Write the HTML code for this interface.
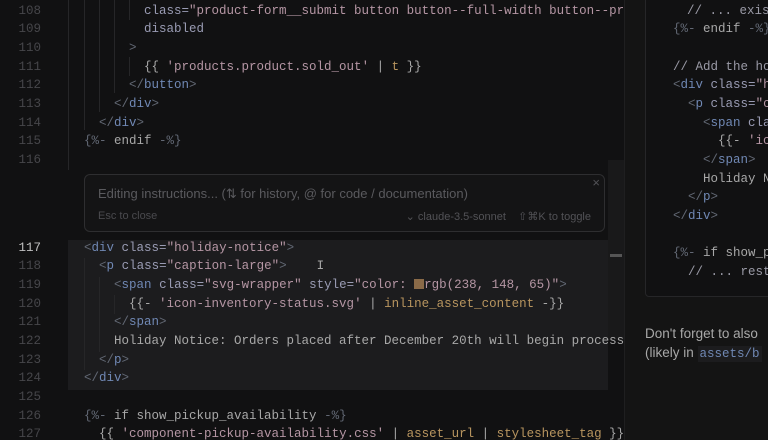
<!DOCTYPE html>
<html><head><meta charset="utf-8"><style>
*{margin:0;padding:0;box-sizing:border-box}
html,body{width:768px;height:440px;overflow:hidden}
body{background:#111112;font-family:"Liberation Mono",monospace;font-size:12.5px;position:relative}
.code{position:absolute;left:0;width:624px;overflow:hidden}
.ln{position:relative;height:18.67px;line-height:18.67px;white-space:pre;color:#9a9aa6}
.ln .n{position:absolute;left:0;width:41px;text-align:right;color:#46464a}
.ln .t{position:absolute;left:84px}
.g{color:#626874}.tg{color:#7088b4}.a{color:#9a9cb4}.s{color:#b596a4}.f{color:#b8955f}.p{color:#a8a8a8}
.hl{position:absolute;left:68px;top:240px;width:540px;height:150px;background:#1c1c1e}
.box{position:absolute;left:84px;top:174px;width:521px;height:58px;border:1px solid #2e2e30;border-radius:6px;background:#141415;font-family:"Liberation Sans",sans-serif}
.right{position:absolute;left:624px;top:0;width:144px;height:440px;background:#141414;border-left:1px solid #1f1f20;overflow:hidden}
.rb{position:absolute;left:20px;top:-10px;width:140px;height:307px;border:1px solid #262628;border-radius:4px;background:#111112}
.rl{position:absolute;left:48px;white-space:pre;color:#9a9aa6}
.ig{position:absolute;width:1px;background:#262628}
</style></head><body>
<div class="hl"></div>
<div class="ig" style="left:68px;top:0;height:170px"></div>
<div class="ig" style="left:84px;top:0;height:130px"></div>
<div class="ig" style="left:99px;top:0;height:112px"></div>
<div class="ig" style="left:114px;top:0;height:93px"></div>
<div class="ig" style="left:129px;top:0;height:20px"></div>
<div class="ig" style="left:129px;top:57px;height:19px"></div>
<div class="ig" style="left:84px;top:258px;height:112px"></div>
<div class="ig" style="left:99px;top:277px;height:75px"></div>
<div class="ig" style="left:114px;top:295px;height:19px"></div>
<div class="code" style="top:1.7px">
<div class="ln"><span class="n">108</span><span class="t">        <span class="a">class=</span><span class="s">"product-form__submit button button--full-width button--pr</span></span></div>
<div class="ln"><span class="n">109</span><span class="t">        <span class="a">disabled</span></span></div>
<div class="ln"><span class="n">110</span><span class="t">      <span class="g">&gt;</span></span></div>
<div class="ln"><span class="n">111</span><span class="t">        <span class="p">{{ </span><span class="s">'products.product.sold_out'</span><span class="p"> | </span><span class="f">t</span><span class="p"> }}</span></span></div>
<div class="ln"><span class="n">112</span><span class="t">      <span class="g">&lt;/</span><span class="tg">button</span><span class="g">&gt;</span></span></div>
<div class="ln"><span class="n">113</span><span class="t">    <span class="g">&lt;/</span><span class="tg">div</span><span class="g">&gt;</span></span></div>
<div class="ln"><span class="n">114</span><span class="t">  <span class="g">&lt;/</span><span class="tg">div</span><span class="g">&gt;</span></span></div>
<div class="ln"><span class="n">115</span><span class="t"><span class="g">{%-</span><span class="p"> endif </span><span class="g">-%}</span></span></div>
<div class="ln"><span class="n">116</span><span class="t"></span></div>
</div>
<div style="position:absolute;left:608px;top:160px;width:16px;height:180px;background:#19191a"></div>
<div style="position:absolute;left:610px;top:254px;width:12px;height:3px;background:#555"></div>
<div class="box">
<div style="position:absolute;left:13px;top:11px;font-size:13px;color:#5a5a5e">Editing instructions... (⇅ for history, @ for code / documentation)</div>
<div style="position:absolute;left:13px;top:35px;font-size:11px;color:#4a4a4e">Esc to close</div>
<div style="position:absolute;right:13px;top:35px;font-size:11px;color:#525256">⌄ claude-3.5-sonnet &nbsp;&nbsp; ⇧⌘K to toggle</div>
<div style="position:absolute;right:4px;top:0px;font-size:13px;color:#525256">×</div>
</div>
<div class="code" style="top:238.7px">
<div class="ln"><span class="n" style="color:#c0c0c0">117</span><span class="t"><span class="g">&lt;</span><span class="tg">div</span> <span class="a">class=</span><span class="s">"holiday-notice"</span><span class="g">&gt;</span></span></div>
<div class="ln"><span class="n">118</span><span class="t">  <span class="g">&lt;</span><span class="tg">p</span> <span class="a">class=</span><span class="s">"caption-large"</span><span class="g">&gt;</span>    <span class="p">I</span></span></div>
<div class="ln"><span class="n">119</span><span class="t">    <span class="g">&lt;</span><span class="tg">span</span> <span class="a">class=</span><span class="s">"svg-wrapper"</span> <span class="a">style=</span><span class="s">"color: <span style="display:inline-block;width:10px;height:10px;background:#8a6a48;vertical-align:-1px"></span>rgb(238, 148, 65)"</span><span class="g">&gt;</span></span></div>
<div class="ln"><span class="n">120</span><span class="t">      <span class="p">{{- </span><span class="s">'icon-inventory-status.svg'</span><span class="p"> | </span><span class="f">inline_asset_content</span><span class="p"> -}}</span></span></div>
<div class="ln"><span class="n">121</span><span class="t">    <span class="g">&lt;/</span><span class="tg">span</span><span class="g">&gt;</span></span></div>
<div class="ln"><span class="n">122</span><span class="t">    <span class="p">Holiday Notice: Orders placed after December 20th will begin processing</span></span></div>
<div class="ln"><span class="n">123</span><span class="t">  <span class="g">&lt;/</span><span class="tg">p</span><span class="g">&gt;</span></span></div>
<div class="ln"><span class="n">124</span><span class="t"><span class="g">&lt;/</span><span class="tg">div</span><span class="g">&gt;</span></span></div>
<div class="ln"><span class="n">125</span><span class="t"></span></div>
<div class="ln"><span class="n">126</span><span class="t"><span class="g">{%-</span><span class="p"> if show_pickup_availability </span><span class="g">-%}</span></span></div>
<div class="ln"><span class="n">127</span><span class="t">  <span class="p">{{ </span><span class="s">'component-pickup-availability.css'</span><span class="p"> | </span><span class="f">asset_url</span><span class="p"> | </span><span class="f">stylesheet_tag</span><span class="p"> }}</span></span></div>
</div>
<div class="right">
<div class="rb"></div>
<div style="position:absolute;left:0;top:1.7px;width:144px">
<div class="ln"><span class="rl" style="left:62px">// ... existing</span></div>
<div class="ln"><span class="rl"><span class="g">{%-</span><span class="p"> endif </span><span class="g">-%}</span></span></div>
<div class="ln"></div>
<div class="ln"><span class="rl">// Add the holiday</span></div>
<div class="ln"><span class="rl"><span class="g">&lt;</span><span class="tg">div</span> <span class="a">class=</span><span class="s">"h</span></span></div>
<div class="ln"><span class="rl" style="left:63px"><span class="g">&lt;</span><span class="tg">p</span> <span class="a">class=</span><span class="s">"c</span></span></div>
<div class="ln"><span class="rl" style="left:78px"><span class="g">&lt;</span><span class="tg">span</span> <span class="a">cla</span></span></div>
<div class="ln"><span class="rl" style="left:93px"><span class="p">{{- </span><span class="s">'ic</span></span></div>
<div class="ln"><span class="rl" style="left:78px"><span class="g">&lt;/</span><span class="tg">span</span><span class="g">&gt;</span></span></div>
<div class="ln"><span class="rl" style="left:78px"><span class="p">Holiday N</span></span></div>
<div class="ln"><span class="rl" style="left:63px"><span class="g">&lt;/</span><span class="tg">p</span><span class="g">&gt;</span></span></div>
<div class="ln"><span class="rl"><span class="g">&lt;/</span><span class="tg">div</span><span class="g">&gt;</span></span></div>
<div class="ln"></div>
<div class="ln"><span class="rl"><span class="g">{%-</span><span class="p"> if show_p</span></span></div>
<div class="ln"><span class="rl" style="left:63px">// ... rest</span></div>
</div>
<div style="position:absolute;left:20px;top:324px;font-family:'Liberation Sans',sans-serif;font-size:13.5px;color:#a8a8a8;white-space:nowrap;line-height:19px">Don't forget to also<br>(likely in <span style="font-family:'Liberation Mono',monospace;font-size:12.5px;color:#7088b4;background:#1c1c1e;padding:1px 2px">assets/b</span></div>
</div>
</body></html>
